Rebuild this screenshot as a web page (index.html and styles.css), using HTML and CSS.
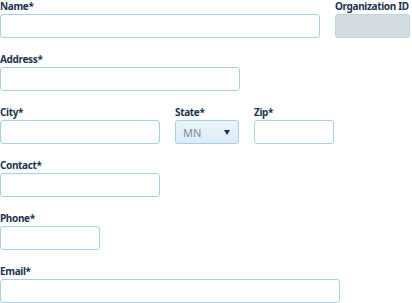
FILE: index.html
```html
<!DOCTYPE html>
<html>
<head>
<meta charset="utf-8">
<link rel="stylesheet" href="styles.css">
</head>
<body>
<form class="form">
  <div class="row">
    <div class="field">
      <label class="label">Name*</label>
      <input class="input w-name" type="text">
    </div>
    <div class="field">
      <label class="label">Organization ID</label>
      <div class="input readonly w-org"></div>
    </div>
  </div>
  <div class="row">
    <div class="field">
      <label class="label">Address*</label>
      <input class="input w-address" type="text">
    </div>
  </div>
  <div class="row">
    <div class="field">
      <label class="label">City*</label>
      <input class="input w-city" type="text">
    </div>
    <div class="field">
      <label class="label">State*</label>
      <div class="select w-state"><span class="select-value">MN</span><span class="caret"></span></div>
    </div>
    <div class="field">
      <label class="label">Zip*</label>
      <input class="input w-zip" type="text">
    </div>
  </div>
  <div class="row">
    <div class="field">
      <label class="label">Contact*</label>
      <input class="input w-contact" type="text">
    </div>
  </div>
  <div class="row">
    <div class="field">
      <label class="label">Phone*</label>
      <input class="input w-phone" type="text">
    </div>
  </div>
  <div class="row">
    <div class="field">
      <label class="label">Email*</label>
      <input class="input w-email" type="text">
    </div>
  </div>
</form>
</body>
</html>
```
FILE: styles.css
```css
* { box-sizing: border-box; }
html, body { margin: 0; padding: 0; background: #fff; }
body { font-family: "Noto Sans", "Open Sans", sans-serif; }
.form { display: flex; flex-direction: column; gap: 15px; }
.row { display: flex; gap: 15px; }
.field { display: flex; flex-direction: column; }
.label {
  font-size: 10px;
  font-weight: 700;
  letter-spacing: -0.35px;
  line-height: 13px;
  height: 14px;
  color: #1b3450;
  white-space: nowrap;
}
.input {
  display: block;
  height: 24px;
  margin: 0;
  padding: 0 6px;
  border: 1px solid #a6d0e3;
  border-radius: 3px;
  background: #fff;
  font: inherit;
  outline: none;
}
.readonly { background: #d3dce1; border-color: #bcd6e2; }
.select {
  display: flex;
  align-items: center;
  justify-content: space-between;
  height: 24px;
  padding: 0 8px 0 7px;
  border: 1px solid #a6d0e3;
  border-radius: 3px;
  background: linear-gradient(#eaf5fb, #dcecf6);
}
.select-value { font-size: 11px; color: #7d8b97; }
.caret {
  width: 0; height: 0;
  border-left: 3.5px solid transparent;
  border-right: 3.5px solid transparent;
  border-top: 5px solid #1b3450;
}
.w-name { width: 320px; }
.w-org { width: 75px; }
.w-address { width: 240px; }
.w-city { width: 160px; }
.w-state { width: 64px; }
.w-zip { width: 80px; }
.w-contact { width: 160px; }
.w-phone { width: 100px; }
.w-email { width: 340px; }
```
